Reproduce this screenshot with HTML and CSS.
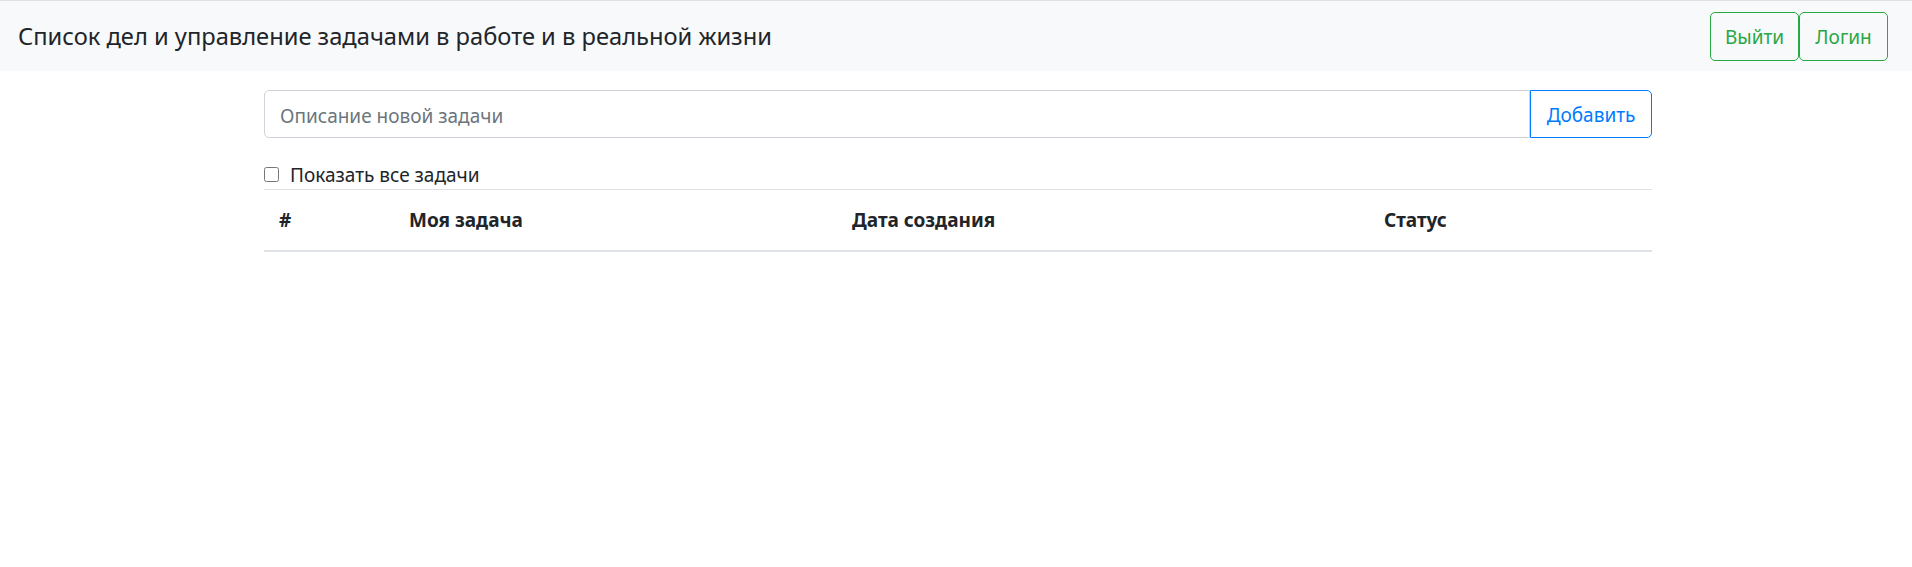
FILE: index.html
```html
<!DOCTYPE html>
<html lang="ru">
<head>
<meta charset="utf-8">
<title>Список дел</title>
<link rel="stylesheet" href="styles.css">
</head>
<body>
<nav class="navbar">
  <span class="brand">Список дел и управление задачами в работе и в реальной жизни</span>
  <div class="nav-actions">
    <button class="btn btn-success">Выйти</button>
    <button class="btn btn-success">Логин</button>
  </div>
</nav>
<main class="container">
  <div class="input-group">
    <input class="task-input" type="text" placeholder="Описание новой задачи">
    <button class="btn btn-primary add-btn">Добавить</button>
  </div>
  <label class="check">
    <input type="checkbox" class="check-box">
    <span>Показать все задачи</span>
  </label>
  <table class="tasks">
    <thead>
      <tr>
        <th class="col-num">#</th>
        <th class="col-task">Моя задача</th>
        <th class="col-date">Дата создания</th>
        <th class="col-status">Статус</th>
      </tr>
    </thead>
    <tbody></tbody>
  </table>
</main>
</body>
</html>
```

FILE: styles.css
```css
* { box-sizing: border-box; }
html, body { margin: 0; padding: 0; }
body {
  font-family: "Noto Sans", "Open Sans", sans-serif;
  font-size: 19px;
  line-height: 30px;
  color: #212529;
  background: #fff;
  border-top: 1px solid #dee2e6;
}
.navbar {
  background: #f8f9fa;
  display: flex;
  align-items: center;
  justify-content: space-between;
  height: 70px;
  padding: 0 24px 0 18px;
}
.brand {
  font-size: 23.7px;
  line-height: 37px;
  white-space: nowrap;
}
.nav-actions { display: flex; }
.btn {
  font-family: inherit;
  font-size: 19px;
  line-height: 30px;
  padding: 8px 15px;
  border-radius: 5px;
  background: transparent;
  cursor: pointer;
}
.btn-success {
  color: #28a745;
  border: 1px solid #28a745;
  height: 49px;
  width: 89px;
  padding: 9px 0 7px;
  text-align: center;
}
.container {
  width: 1388px;
  margin-left: calc(50% - 692px);
  padding-top: 19px;
}
.input-group {
  display: flex;
  height: 48px;
}
.task-input {
  flex: 1;
  font-family: inherit;
  font-size: 19px;
  padding: 10px 15px 6px;
  border: 1px solid #ced4da;
  border-radius: 5px 0 0 5px;
  color: #495057;
}
.task-input::placeholder { color: #6c757d; }
.add-btn {
  width: 122px;
  color: #007bff;
  border: 1px solid #007bff;
  border-radius: 0 5px 5px 0;
  padding: 9px 0 7px;
  text-align: center;
}
.check {
  display: flex;
  align-items: center;
  gap: 11px;
  margin-top: 22px;
  height: 29px;
}
.check-box {
  width: 15px;
  height: 15px;
  margin: 0;
}
.tasks {
  width: 100%;
  border-collapse: collapse;
  border-top: 1px solid #dee2e6;
}
.tasks th {
  text-align: left;
  font-weight: 700;
  padding: 15px;
  line-height: 30px;
  border-bottom: 2px solid #dee2e6;
}
.col-num { width: 130px; }
.col-task { width: 443px; }
.col-date { width: 532px; }
```
